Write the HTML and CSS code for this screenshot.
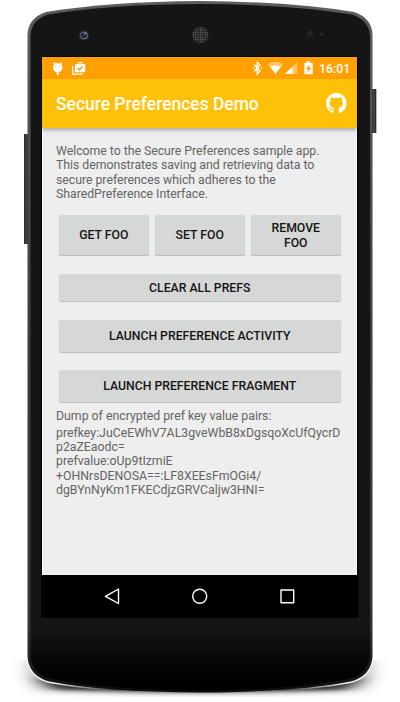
FILE: index.html
```html
<!DOCTYPE html>
<html lang="en">
<head>
<meta charset="utf-8">
<title>Secure Preferences Demo</title>
<link rel="stylesheet" href="styles.css">
</head>
<body>
<div class="device">
  <svg class="shell" viewBox="0 0 400 702" aria-hidden="true">
    <defs>
      <linearGradient id="rim" x1="0" y1="0" x2="0" y2="1">
        <stop offset="0" stop-color="#5b5d5c"/><stop offset=".5" stop-color="#3b3d3d"/><stop offset=".9" stop-color="#353535"/><stop offset="1" stop-color="#0c0c0c"/>
      </linearGradient>
      <linearGradient id="face" x1="0" y1="0" x2="0" y2="1">
        <stop offset="0" stop-color="#151515"/><stop offset=".91" stop-color="#151515"/><stop offset=".97" stop-color="#030303"/><stop offset="1" stop-color="#000"/>
      </linearGradient>
      <linearGradient id="key"><stop offset="0" stop-color="#222"/><stop offset=".5" stop-color="#484848"/><stop offset="1" stop-color="#191919"/></linearGradient>
      <linearGradient id="glint"><stop offset="0" stop-color="#f4f4f4"/><stop offset=".08" stop-color="#eee"/><stop offset=".25" stop-color="#eee" stop-opacity="0"/><stop offset=".75" stop-color="#eee" stop-opacity="0"/><stop offset=".92" stop-color="#eee"/><stop offset="1" stop-color="#f4f4f4"/></linearGradient>
      <linearGradient id="fade" x1="0" y1="0" x2="0" y2="1"><stop offset="0" stop-color="#fff"/><stop offset=".9" stop-color="#fff"/><stop offset="1" stop-color="#000"/></linearGradient>
      <filter id="soft" x="-20%" y="-50%" width="140%" height="200%"><feGaussianBlur stdDeviation="9 2.500"/></filter>
      <filter id="side" x="-20%" y="-50%" width="140%" height="200%"><feGaussianBlur stdDeviation="8 10"/></filter>
      <pattern id="mesh" width="2.400" height="2.400" patternUnits="userSpaceOnUse"><rect width="2.400" height="2.400" fill="#1c1c1c"/><circle cx="1.200" cy="1.200" r=".8" fill="#6a6a6a"/></pattern>
      <mask id="floor"><rect y="600" width="400" height="99" fill="url(#fade)"/></mask>
    </defs>
    <g mask="url(#floor)">
      <path d="M23 663H377L365 686Q200 697 35 686Z" fill="#000" opacity=".36" filter="url(#side)"/>
      <path d="M38 678H362L345 690Q200 697 55 690Z" fill="#000" opacity=".8" filter="url(#soft)"/>
    </g>
    <rect x="24" y="134" width="4" height="110" fill="url(#key)"/>
    <rect x="372" y="89" width="4.300" height="44" fill="url(#key)"/>
    <path d="M27 654Q27 676 48 682Q102 692.500 200 693Q298 692.500 352 682Q373 676 373 654" fill="none" stroke="url(#glint)" stroke-width="1.400"/>
    <path d="M27.500 35Q28 18 46 12Q110 1.500 200 1Q290 1.500 354 12Q372 18 372.500 35V655Q372 675 352 681Q295 692 200 692.500Q105 692 48 681Q28 675 27.500 655Z" fill="url(#rim)"/>
    <path d="M30.500 36Q31 20 48 14.500Q110 4.200 200 4Q290 4.200 352 14.500Q369 20 370 36V654Q369 673 351 678.500Q293 690 200 690.500Q107 690 49 678.500Q31 673 30.500 654Z" fill="url(#face)"/>
    <rect x="41" y="56" width="317.500" height="562" fill="#030303"/>
    <circle cx="84" cy="35.500" r="5" fill="#303032"/><circle cx="84" cy="35.500" r="3.800" fill="#65666b"/><circle cx="83.800" cy="35.300" r="2.600" fill="#15153a"/><circle cx="83.500" cy="35.500" r="1.100" fill="#4040b8"/><circle cx="85" cy="33.800" r=".7" fill="#d4d6e3"/>
    <circle cx="200.300" cy="35" r="8" fill="url(#mesh)" stroke="#2b2b2b" stroke-width=".5"/>
    <circle cx="310" cy="34" r="3.300" fill="#242424"/><circle cx="321.500" cy="34.500" r="2" fill="#242424"/>
  </svg>
  <div class="screen">
    <header class="status">
      <svg class="status-left" viewBox="0 0 50 22" aria-hidden="true" fill="#fff">
        <path d="M12 5L13.200 6.600Q15.700 5.800 18.200 6.600L19.400 5L20.100 5.500L19.400 7.400Q20.900 9 20.400 11.400Q19.500 14.800 16.700 15.500V18H14.900V15.500Q11.900 14.800 11 11.400Q10.500 9 12 7.400L11.300 5.500Z"/>
        <g fill="#ffa000"><circle cx="13.800" cy="9" r=".6"/><circle cx="17.500" cy="9" r=".6"/></g>
        <path d="M30.700 9V17.200H41" fill="none" stroke="#fff" stroke-width="1.300"/>
        <path fill-rule="evenodd" d="M32.900 7.200H35.700V5.800Q35.700 5 36.500 5H39.600Q40.400 5 40.400 5.800V7.200H43.200V15.300H32.900ZM36.800 6V7.200H39.300V6Z"/>
        <path d="M35.700 11L37.400 12.700L40.600 9.400" fill="none" stroke="#f39300" stroke-width="1.300"/>
      </svg>
      <svg class="status-right" viewBox="0 0 64 22" aria-hidden="true" fill="#fff">
        <path d="M3 7.500L9 14L6.200 17V5.200L9 8L3 14.500" fill="none" stroke="#fff" stroke-width="1.300"/><circle cx="2.700" cy="11" r=".8"/><circle cx="10.200" cy="11" r=".8"/>
        <path d="M16.800 7.200Q24.500 2.500 32.200 7.200L24.500 17Z" opacity=".4"/><path d="M19.300 9.800Q24.500 6.500 29.700 9.800L24.500 17Z"/>
        <path d="M46.200 5V17H34Z" opacity=".4"/><path d="M41.500 9.600V17H34Z"/>
        <path d="M53.400 6H55.500V4.500H59.200V6H61.700V17.300H53.400Z"/><path d="M58.700 7.500L55 12H57.200L56.200 16L60.200 11H58Z" fill="#f79b00"/>
      </svg>
      <span class="clock">16:01</span>
    </header>
    <div class="appbar">
      <h1>Secure Preferences Demo</h1>
      <svg class="github" viewBox="0 0 16 16" role="img" aria-label="GitHub"><path fill="#fff" d="M8 0C3.580 0 0 3.580 0 8c0 3.540 2.290 6.530 5.470 7.590.4.070.55-.17.55-.38 0-.19-.01-.82-.01-1.490-2.010.37-2.530-.49-2.690-.94-.09-.23-.48-.94-.82-1.130-.28-.15-.68-.52-.01-.53.63-.01 1.080.58 1.230.82.72 1.210 1.870.87 2.330.66.070-.52.28-.87.51-1.070-1.780-.2-3.640-.89-3.640-3.950 0-.87.31-1.590.82-2.150-.08-.2-.36-1.020.08-2.120 0 0 .67-.21 2.200.82.64-.18 1.320-.27 2-.27s1.360.09 2 .27c1.530-1.040 2.200-.82 2.200-.82.44 1.100.16 1.920.08 2.120.51.56.82 1.270.82 2.150 0 3.070-1.870 3.750-3.650 3.950.29.25.54.73.54 1.480 0 1.070-.01 1.930-.01 2.200 0 .21.15.46.55.38A8.010 8.010 0 0 0 16 8c0-4.420-3.580-8-8-8Z"/></svg>
    </div>
    <main class="content">
      <p class="intro">Welcome to the Secure Preferences sample app.<br>This demonstrates saving and retrieving data to<br>secure preferences which adheres to the<br>SharedPreference Interface.</p>
      <div class="actions">
        <button>GET FOO</button><button>SET FOO</button><button>REMOVE<br>FOO</button>
      </div>
      <button class="wide clear">CLEAR ALL PREFS</button>
      <button class="wide">LAUNCH PREFERENCE ACTIVITY</button>
      <button class="wide">LAUNCH PREFERENCE FRAGMENT</button>
      <p class="dump-title">Dump of encrypted pref key value pairs:</p>
      <p class="dump">prefkey:JuCeEWhV7AL3gveWbB8xDgsqoXcUfQycrD<br>p2aZEaodc=<br>prefvalue:oUp9tIzmiE<br>+OHNrsDENOSA==:LF8XEEsFmOGi4/<br>dgBYnNyKm1FKECdjzGRVCaljw3HNI=</p>
    </main>
    <nav class="navbar">
      <svg viewBox="0 0 315 42" aria-hidden="true" fill="none" stroke="#fff" stroke-width="1.400" stroke-linejoin="round"><path d="M76.500 14V28.500L63.500 21.300Z"/><circle cx="157.700" cy="21.300" r="7"/><rect x="239" y="15" width="12.700" height="12.700"/></svg>
    </nav>
  </div>
</div>
</body>
</html>
```
FILE: styles.css
```css
* { box-sizing: border-box; }
body { margin: 0; background: #fff; font-family: Roboto, sans-serif; overflow: hidden; }
h1, p { margin: 0; font-weight: 400; }
svg { display: block; }
.device { display: grid; width: 400px; height: 702px; }
.shell { grid-area: 1 / 1; width: 400px; height: 702px; }
.screen {
  grid-area: 1 / 1;
  z-index: 1;
  width: 315px;
  height: 560px;
  margin: 57px 0 0 42px;
  display: flex;
  flex-direction: column;
  background: #eee;
}
.status { height: 22px; flex: none; display: flex; align-items: center; background: #ffa000; color: #fff; }
.status-left { width: 50px; height: 22px; }
.status-right { width: 64px; height: 22px; margin-left: 159px; }
.clock { margin-left: 4px; font-size: 12.3px; font-weight: 500; line-height: 22px; white-space: nowrap; padding-top: 1px; }
.appbar {
  height: 49px;
  flex: none;
  display: flex;
  align-items: center;
  justify-content: space-between;
  padding: 0 10.5px 0 14px;
  background: #ffc107;
  box-shadow: 0 2px 4px rgba(0, 0, 0, .3);
  clip-path: inset(0 0 -8px 0);
}
.appbar h1 { color: #fff; font-size: 17.45px; font-weight: 500; line-height: 24px; white-space: nowrap; padding-top: 1px; }
.github { width: 20.5px; height: 20.5px; }
.content { flex: 1; padding: 16px 13px 0; color: #646464; font-size: 12.3px; line-height: 14.35px; border-left: 1px solid #fafafa; border-right: 1px solid #fafafa; }
.content p { white-space: nowrap; }
.content .intro { letter-spacing: -.03px; }
.actions { display: grid; grid-template-columns: repeat(3, 1fr); gap: 6.5px; margin: 14px 2.5px 0 3px; }
button {
  display: block;
  height: 40px;
  padding: .5px 0 0;
  border: 0;
  border-radius: 2px;
  background: #d6d8d7;
  color: #141414;
  font: 500 12.25px/14.35px Roboto, sans-serif;
  box-shadow: 0 1px 1px rgba(0, 0, 0, .22);
}
.wide { width: 281.5px; height: 32px; margin: 18.6px 0 0 3px; padding-top: 1px; }
.clear { height: 27px; }
.dump-title { margin-top: 6.5px; }
.dump { margin-top: 2.7px; }
.navbar { height: 42px; flex: none; background: #000; }
.navbar svg { width: 315px; height: 42px; }
```
